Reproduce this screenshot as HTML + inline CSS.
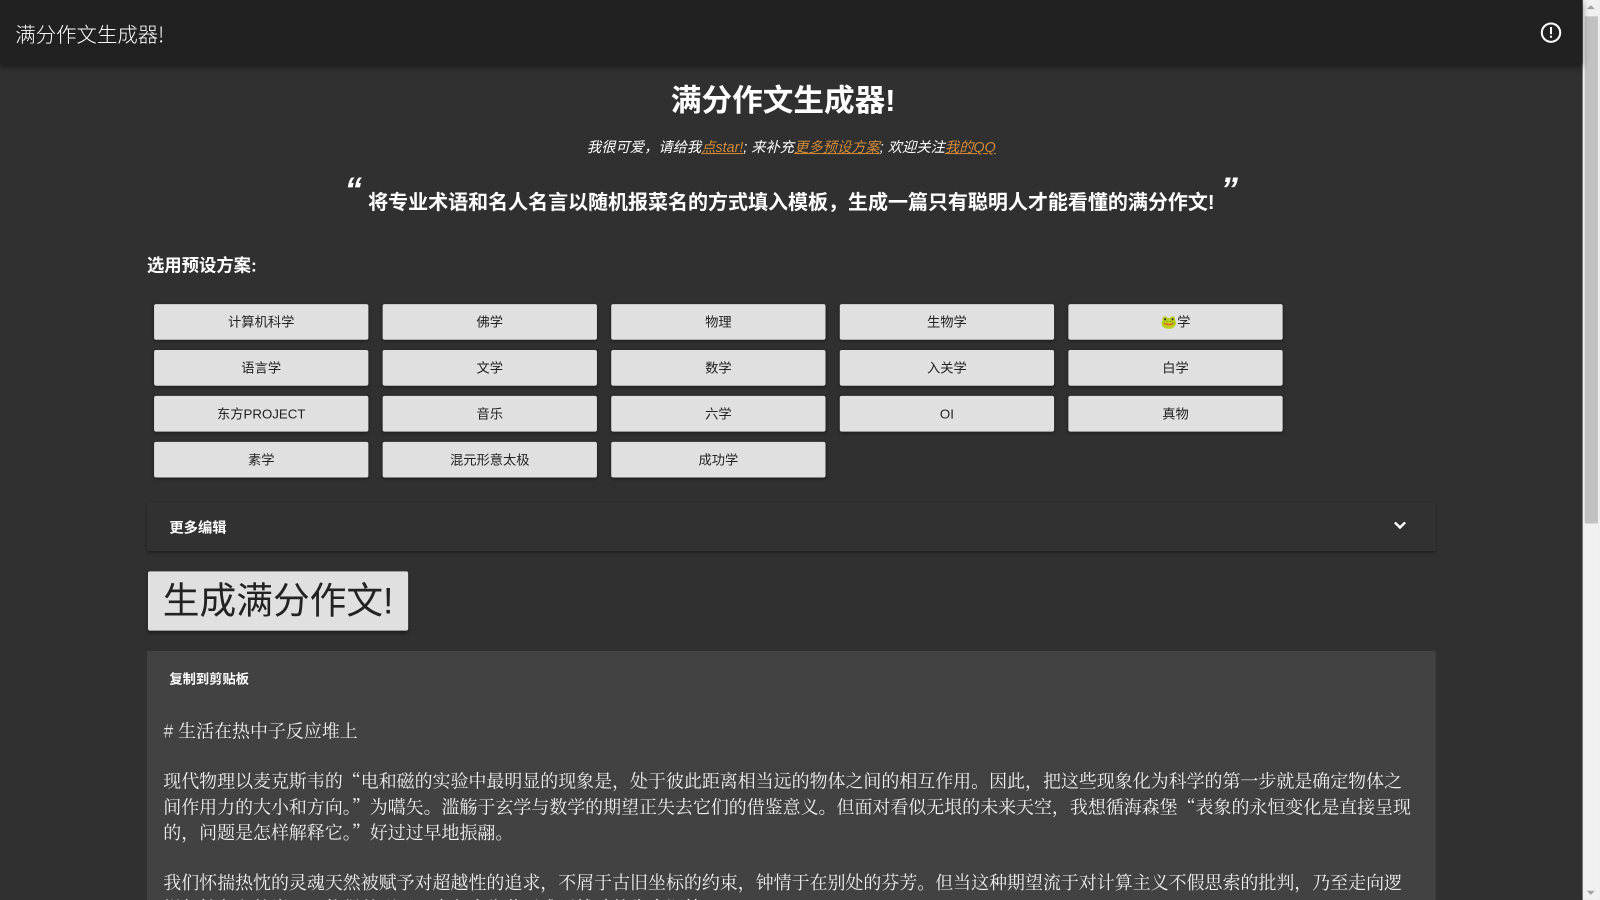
<!DOCTYPE html>
<html><head><meta charset="utf-8"><style>
*{box-sizing:border-box;margin:0;padding:0}
html,body{width:1600px;height:900px;overflow:hidden;background:#303030;font-family:"Liberation Sans","Noto Sans CJK SC",sans-serif;color:#fff}
#w{position:absolute;left:0;top:0;width:1568px;height:882px;overflow:hidden;transform:scale(1.0204);transform-origin:0 0}
.hdr{position:absolute;left:0;top:0;width:1551px;height:63px;background:#212121;box-shadow:0 2px 6px rgba(0,0,0,.5);z-index:2}
.hdr .t{position:absolute;left:15px;top:18px;font-size:20px;font-family:"Noto Sans CJK SC",sans-serif;font-weight:300}
.hdr svg{position:absolute;left:1508px;top:20px}
.sb{position:absolute;left:1551px;top:0;width:17px;height:882px;background:#f0f0f0}
.sb .th{position:absolute;left:2px;top:16px;width:13px;height:497px;background:#c1c1c1}
.sb .a{position:absolute;left:4px;top:5px;width:0;height:0;border-left:4px solid transparent;border-right:4px solid transparent;border-bottom:4px solid #a3a3a3}
.sb .a2{top:auto;bottom:5px;border-bottom:0;border-top:4px solid #a3a3a3}
h1{position:absolute;left:-8px;width:1551px;top:74px;text-align:center;font-size:30px;font-weight:bold}
.sub{position:absolute;left:0;width:1551px;top:134px;text-align:center;font-size:14px;font-style:italic}
.sub a{color:#d08a3a;text-decoration:underline}
.q{position:absolute;left:0;width:1551px;top:175px;text-align:center;font-size:19.6px;font-weight:bold}
.q i{font-size:34px;position:relative;top:-8px;margin:0 6px;font-style:italic}
.lbl{position:absolute;left:144px;top:246px;font-size:17px;font-weight:bold}
.btn{position:absolute;width:210px;height:35px;background:#e0e0e0;color:#222;font-size:13px;text-align:center;line-height:35px;border-radius:2px;box-shadow:0 1px 3px rgba(0,0,0,.4)}
.more{position:absolute;left:144px;top:492px;width:1263px;height:48px;background:#313131;box-shadow:0 2px 3px rgba(0,0,0,.4);font-size:14px;font-weight:bold}
.more span{position:absolute;left:22px;top:15px}
.more svg{position:absolute;right:28px;top:18px}
.gen{position:absolute;left:145px;top:560px;width:255px;height:58px;background:#e0e0e0;color:#222;font-size:36px;line-height:58px;text-align:center;border-radius:2px;box-shadow:0 2px 3px rgba(0,0,0,.4)}
.card{position:absolute;left:144px;top:638px;width:1263px;height:244px;overflow:hidden;background:#424242}
.copy{position:absolute;left:22px;top:17px;font-size:13px;font-weight:bold}
.txt{position:absolute;left:16px;top:66px;width:1225px;font-family:"Noto Serif CJK SC",serif;font-size:17.6px;line-height:25px;color:#eee}
.txt p{margin-bottom:24px}
</style></head><body><div id="w">
<div class="hdr"><div class="t">满分作文生成器!</div>
<svg width="24" height="24" viewBox="0 0 24 24"><circle cx="12" cy="12" r="9" fill="none" stroke="#fff" stroke-width="2"/><rect x="11" y="6.5" width="2" height="7" fill="#fff"/><rect x="11" y="15" width="2" height="2" fill="#fff"/></svg></div>
<div class="sb"><div class="a"></div><div class="th"></div><div class="a a2"></div></div>
<h1>满分作文生成器!</h1>
<div class="sub">我很可爱，请给我<a>点star!</a>; 来补充<a>更多预设方案</a>; 欢迎关注<a>我的QQ</a></div>
<div class="q"><i>“</i>将专业术语和名人名言以随机报菜名的方式填入模板，生成一篇只有聪明人才能看懂的满分作文!<i>”</i></div>
<div class="lbl">选用预设方案:</div>
<div class="btn" style="left:151px;top:298px">计算机科学</div>
<div class="btn" style="left:375px;top:298px">佛学</div>
<div class="btn" style="left:599px;top:298px">物理</div>
<div class="btn" style="left:823px;top:298px">生物学</div>
<div class="btn" style="left:1047px;top:298px">🐸学</div>
<div class="btn" style="left:151px;top:343px">语言学</div>
<div class="btn" style="left:375px;top:343px">文学</div>
<div class="btn" style="left:599px;top:343px">数学</div>
<div class="btn" style="left:823px;top:343px">入关学</div>
<div class="btn" style="left:1047px;top:343px">白学</div>
<div class="btn" style="left:151px;top:388px">东方PROJECT</div>
<div class="btn" style="left:375px;top:388px">音乐</div>
<div class="btn" style="left:599px;top:388px">六学</div>
<div class="btn" style="left:823px;top:388px">OI</div>
<div class="btn" style="left:1047px;top:388px">真物</div>
<div class="btn" style="left:151px;top:433px">素学</div>
<div class="btn" style="left:375px;top:433px">混元形意太极</div>
<div class="btn" style="left:599px;top:433px">成功学</div>
<div class="more"><span>更多编辑</span><svg width="14" height="10" viewBox="0 0 14 10"><path d="M2 2l5 5 5-5" fill="none" stroke="#fff" stroke-width="2.4"/></svg></div>
<div class="gen">生成满分作文!</div>
<div class="card"><div class="copy">复制到剪贴板</div>
<div class="txt"><p># 生活在热中子反应堆上</p>
<p>现代物理以麦克斯韦的“电和磁的实验中最明显的现象是，处于彼此距离相当远的物体之间的相互作用。因此，把这些现象化为科学的第一步就是确定物体之间作用力的大小和方向。”为嚆矢。滥觞于玄学与数学的期望正失去它们的借鉴意义。但面对看似无垠的未来天空，我想循海森堡“表象的永恒变化是直接呈现的，问题是怎样解释它。”好过过早地振翮。</p>
<p>我们怀揣热忱的灵魂天然被赋予对超越性的追求，不屑于古旧坐标的约束，钟情于在别处的芬芳。但当这种期望流于对计算主义不假思索的批判，乃至走向逻辑与抽象之彼岸，只能得其形已，未免会失落于难以拨动的生命深处。</p></div></div>
</div></body></html>
